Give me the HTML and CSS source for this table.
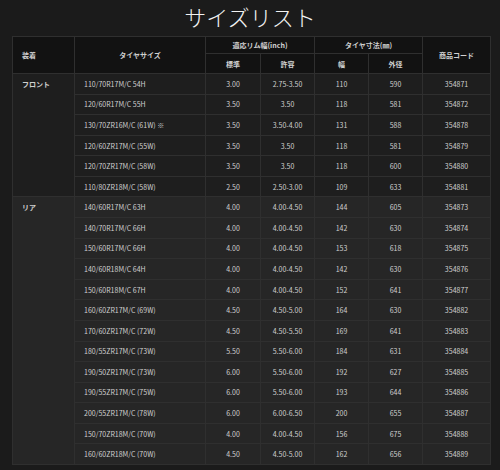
FILE: index.html
```html
<!DOCTYPE html>
<html lang="ja">
<head>
<meta charset="utf-8">
<link rel="stylesheet" href="styles.css">
</head>
<body>
<h1 class="title">サイズリスト</h1>
<table class="sizes">
  <colgroup>
    <col class="c-pos"><col class="c-size"><col class="c-std"><col class="c-allow"><col class="c-w"><col class="c-d"><col class="c-code">
  </colgroup>
  <thead>
    <tr class="h1">
      <th rowspan="2" class="left">装着</th>
      <th rowspan="2">タイヤサイズ</th>
      <th colspan="2">適応リム幅(inch)</th>
      <th colspan="2">タイヤ寸法(㎜)</th>
      <th rowspan="2">商品コード</th>
    </tr>
    <tr class="h2">
      <th>標準</th><th>許容</th><th>幅</th><th>外径</th>
    </tr>
  </thead>
  <tbody class="front">
    <tr><td rowspan="6" class="pos">フロント</td><td class="size">110/70R17M/C 54H</td><td>3.00</td><td>2.75-3.50</td><td>110</td><td>590</td><td>354871</td></tr>
    <tr><td class="size">120/60R17M/C 55H</td><td>3.50</td><td>3.50</td><td>118</td><td>581</td><td>354872</td></tr>
    <tr><td class="size">130/70ZR16M/C (61W) ※</td><td>3.50</td><td>3.50-4.00</td><td>131</td><td>588</td><td>354878</td></tr>
    <tr><td class="size">120/60ZR17M/C (55W)</td><td>3.50</td><td>3.50</td><td>118</td><td>581</td><td>354879</td></tr>
    <tr><td class="size">120/70ZR17M/C (58W)</td><td>3.50</td><td>3.50</td><td>118</td><td>600</td><td>354880</td></tr>
    <tr><td class="size">110/80ZR18M/C (58W)</td><td>2.50</td><td>2.50-3.00</td><td>109</td><td>633</td><td>354881</td></tr>
  </tbody>
  <tbody class="rear">
    <tr><td rowspan="13" class="pos">リア</td><td class="size">140/60R17M/C 63H</td><td>4.00</td><td>4.00-4.50</td><td>144</td><td>605</td><td>354873</td></tr>
    <tr><td class="size">140/70R17M/C 66H</td><td>4.00</td><td>4.00-4.50</td><td>142</td><td>630</td><td>354874</td></tr>
    <tr><td class="size">150/60R17M/C 66H</td><td>4.00</td><td>4.00-4.50</td><td>153</td><td>618</td><td>354875</td></tr>
    <tr><td class="size">140/60R18M/C 64H</td><td>4.00</td><td>4.00-4.50</td><td>142</td><td>630</td><td>354876</td></tr>
    <tr><td class="size">150/60R18M/C 67H</td><td>4.00</td><td>4.00-4.50</td><td>152</td><td>641</td><td>354877</td></tr>
    <tr><td class="size">160/60ZR17M/C (69W)</td><td>4.50</td><td>4.50-5.00</td><td>164</td><td>630</td><td>354882</td></tr>
    <tr><td class="size">170/60ZR17M/C (72W)</td><td>4.50</td><td>4.50-5.50</td><td>169</td><td>641</td><td>354883</td></tr>
    <tr><td class="size">180/55ZR17M/C (73W)</td><td>5.50</td><td>5.50-6.00</td><td>184</td><td>631</td><td>354884</td></tr>
    <tr><td class="size">190/50ZR17M/C (73W)</td><td>6.00</td><td>5.50-6.00</td><td>192</td><td>627</td><td>354885</td></tr>
    <tr><td class="size">190/55ZR17M/C (75W)</td><td>6.00</td><td>5.50-6.00</td><td>193</td><td>644</td><td>354886</td></tr>
    <tr><td class="size">200/55ZR17M/C (78W)</td><td>6.00</td><td>6.00-6.50</td><td>200</td><td>655</td><td>354887</td></tr>
    <tr><td class="size">150/70ZR18M/C (70W)</td><td>4.00</td><td>4.00-4.50</td><td>156</td><td>675</td><td>354888</td></tr>
    <tr><td class="size">160/60ZR18M/C (70W)</td><td>4.50</td><td>4.50-5.00</td><td>162</td><td>656</td><td>354889</td></tr>
  </tbody>
</table>
</body>
</html>
```
FILE: styles.css
```css
html, body {
  margin: 0;
  padding: 0;
  background: #1b1b1b;
}
body {
  font-family: "Noto Sans CJK JP", "Noto Sans", sans-serif;
  color: #cfcfcf;
}
.title {
  box-sizing: border-box;
  margin: 0;
  height: 36px;
  padding-bottom: 4px;
  line-height: 32px;
  text-align: center;
  font-size: 22px;
  font-weight: 300;
  color: #f2f2f2;
  font-family: "Noto Sans CJK JP", serif;
}
.sizes {
  margin-left: 12px;
  width: 478px;
  border-collapse: collapse;
  table-layout: fixed;
  font-size: 7px;
}
.c-pos { width: 62px; }
.c-size { width: 131px; }
.c-std { width: 55px; }
.c-allow { width: 54px; }
.c-w { width: 54px; }
.c-d { width: 54px; }
.c-code { width: 68px; }
.sizes th, .sizes td {
  border: 1px solid #2f2f2f;
  padding: 0;
  text-align: center;
  line-height: 10px;
}
.sizes th {
  background: #121212;
  font-weight: 700;
  color: #d0d0d0;
}
.sizes th.left { text-align: left; padding-left: 9px; }
.h1 { height: 17px; }
.h2 { height: 20px; }
.sizes tbody tr { height: 20.58px; }
.front td { background: #1e1e1e; }
.rear td { background: #262626; }
.sizes td.size { text-align: left; padding-left: 9px; }
.sizes td.pos {
  text-align: left;
  vertical-align: top;
  padding-left: 9px;
  padding-top: 5px;
  font-weight: 700;
}
```
